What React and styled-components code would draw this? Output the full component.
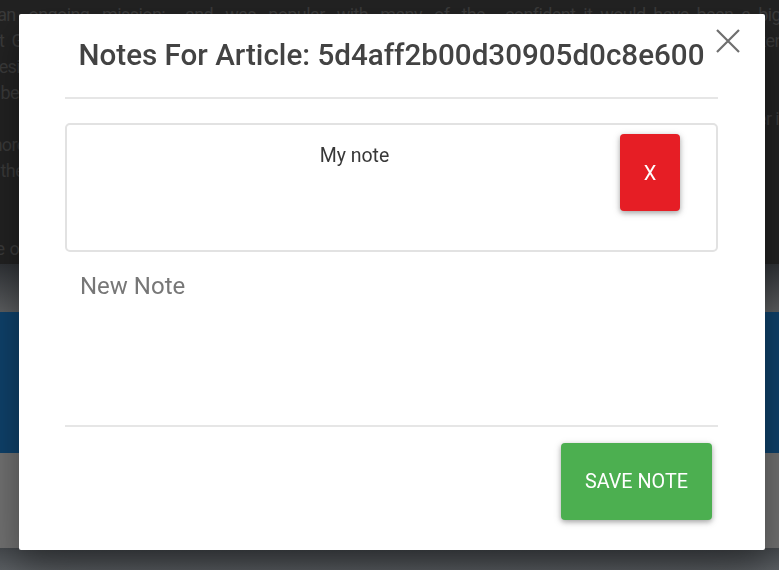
import React from "react";
import styled, { createGlobalStyle } from "styled-components";

// Notes modal over a dimmed article page

const GlobalStyle = createGlobalStyle`
    html, body {
        margin: 0;
        padding: 0;
        height: 100%;
        overflow: hidden;
        font-family: Roboto, "Liberation Sans", sans-serif;
    }
`;

const Page = styled.div`
    height: 570px;
    display: flex;
    flex-direction: column;
    background: #222;
`;

const Articles = styled.div`
    height: 263px;
    display: grid;
    grid-template-columns: repeat(4, 300px);
    column-gap: 20px;
    margin-left: -135px;
    padding-top: 2px;
    overflow: hidden;
    background: #222;
`;

const ArticleText = styled.p`
    margin: 0;
    color: #3a3a3a;
    font-size: 18px;
    line-height: 26px;
    text-align: justify;
    letter-spacing: -0.6px;
    & + & {
        margin-top: 26px;
    }
`;

const Band = styled.div`
    height: ${props => props.h}px;
    background: ${props => props.bg};
`;

const Modal = styled.div`
    position: fixed;
    top: 14px;
    left: 19px;
    width: 746px;
    height: 536px;
    box-sizing: border-box;
    padding: 24px 47px 0 46px;
    background: #fff;
    border-radius: 2px;
    box-shadow: 0 16px 28px rgba(0, 0, 0, 0.22), 0 25px 55px rgba(0, 0, 0, 0.21);
    display: flex;
    flex-direction: column;
`;

const Header = styled.div`
    padding-bottom: 25px;
    border-bottom: 2px solid #e6e6e6;
`;

const Title = styled.h4`
    margin: 0;
    text-align: center;
    font-size: 29.6px;
    font-weight: 500;
    line-height: 34px;
    color: #434343;
`;

const CloseButton = styled.button`
    position: absolute;
    top: 15px;
    right: 25px;
    width: 24px;
    height: 24px;
    padding: 0;
    border: none;
    background: none;
    cursor: pointer;
    svg {
        display: block;
    }
`;

const NoteCard = styled.div`
    margin-top: 24px;
    height: 129px;
    box-sizing: border-box;
    border: 2px solid #e2e2e2;
    border-radius: 5px;
    padding: 9px 36px 0 32px;
    display: flex;
    align-items: flex-start;
    gap: 10px;
`;

const NoteText = styled.div`
    flex: 1;
    padding-top: 10px;
    text-align: center;
    font-size: 19.5px;
    line-height: 24px;
    color: #383838;
`;

const RaisedButton = styled.button`
    border: none;
    border-radius: 4px;
    color: #fff;
    font-family: Roboto, "Liberation Sans", sans-serif;
    text-transform: uppercase;
    box-shadow: 0 2px 5px rgba(0, 0, 0, 0.28), 0 2px 10px rgba(0, 0, 0, 0.12);
    cursor: pointer;
`;

const DeleteButton = styled(RaisedButton)`
    width: 60px;
    height: 77px;
    background: #e61e25;
    font-size: 20px;
`;

const NewNote = styled.textarea`
    margin-top: 10px;
    height: 165px;
    box-sizing: border-box;
    padding: 10px 15px;
    border: none;
    border-bottom: 2px solid #e6e6e6;
    resize: none;
    outline: none;
    font-family: Roboto, "Liberation Sans", sans-serif;
    font-size: 24px;
    line-height: 28px;
    color: #333;
    &::placeholder {
        color: #777;
    }
`;

const Footer = styled.div`
    display: flex;
    justify-content: flex-end;
    padding: 16px 6px 0 0;
`;

const SaveButton = styled(RaisedButton)`
    height: 77px;
    padding: 0 24px;
    background: #4caf50;
    font-size: 19.8px;
`;

const articles = [
    ["and said it is an ongoing mission: Canada the Coast Guard and the local agencies, saving residents and others in the Ottawa region because of the", "Officials said more resources were needed to help the situation on the ground.", "Information on the other issues is being gathered by the teams."],
    ["and was popular with many of the residents who spoke of the work being done on the river and the banks by the army", "teams that were brought in to help last week.", "The plan was to continue the work."],
    ["confident it would have been a bigger story if not for the quick actions taken by the city in the early hours", "of the emergency and the days after it.", "Crews will remain on site."],
    ["volunteers who came out and packed sandbags around the community centre to serve the residents who needed help and support through the", "weekend. Chief officials thanked them all.", "More updates will follow."],
];

const App = () => {
    return (
        <>
            <GlobalStyle />
            <Page>
                <Articles>
                    {articles.map((col, i) => (
                        <div key={i}>
                            {col.map((p, j) => (
                                <ArticleText key={j}>{p}</ArticleText>
                            ))}
                        </div>
                    ))}
                </Articles>
                <Band h={48} bg="linear-gradient(#2f3236, #5c5e60)" />
                <Band h={142} bg="#0f416a" />
                <Band h={95} bg="#717171" />
                <Band h={22} bg="linear-gradient(#45494d, #5a5e62)" />
            </Page>
            <Modal>
                <CloseButton aria-label="close">
                    <svg width="24" height="24" viewBox="0 0 24 24">
                        <path d="M1 1 L23 23 M23 1 L1 23" stroke="#6f6f6f" strokeWidth="2.2" fill="none" />
                    </svg>
                </CloseButton>
                <Header>
                    <Title>Notes For Article: 5d4aff2b00d30905d0c8e600</Title>
                </Header>
                <NoteCard>
                    <NoteText>My note</NoteText>
                    <DeleteButton>x</DeleteButton>
                </NoteCard>
                <NewNote placeholder="New Note" />
                <Footer>
                    <SaveButton>Save Note</SaveButton>
                </Footer>
            </Modal>
        </>
    );
};

export default App;
